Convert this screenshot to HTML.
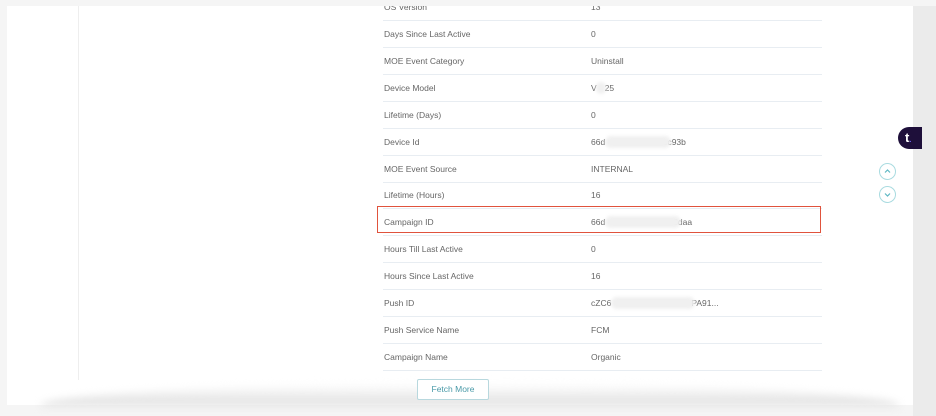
<!DOCTYPE html>
<html><head><style>
body{margin:0;width:936px;height:416px;background:#f5f5f5;position:relative;overflow:hidden;font-family:"Liberation Sans",sans-serif;}
.panel{position:absolute;left:7px;top:6px;width:906px;height:399px;background:#fff;}
.top{position:absolute;left:0;top:0;width:936px;height:6px;background:#f5f5f5;z-index:5;}
.rstrip{position:absolute;left:913px;top:0;width:23px;height:416px;background:#ebebeb;}
.vline{position:absolute;left:78px;top:6px;width:1px;height:374px;background:#eeeeee;}
.row{position:absolute;left:383px;width:439px;height:27px;border-bottom:1px solid #e8edf2;font-size:8.5px;color:#666;}
.row span{position:absolute;top:50%;transform:translateY(-50%);}
.l{left:1px}.v{left:208px}
.blur{position:absolute;background:#f0f0f0;border-radius:8px;filter:blur(1.5px);height:12px;top:50%;transform:translateY(-50%);}
.box{position:absolute;left:377px;top:206px;width:442px;height:25px;border:1.5px solid #e0533d;}
.btn{position:absolute;left:417px;top:379px;width:70px;height:19px;border:1px solid #b8d8de;border-radius:2px;font-size:8.5px;color:#4a9aa8;text-align:center;line-height:19px;background:#fff;z-index:3;}
.shadow{position:absolute;left:40px;top:384px;width:860px;height:22px;background:linear-gradient(#fff,#dedede);border-radius:50% 50% 0 0/100% 100% 0 0;filter:blur(4px);}
.circ{position:absolute;left:879px;width:15px;height:15px;border:1px solid #a9dbe0;border-radius:50%;}
.t{position:absolute;left:898px;top:127px;width:24px;height:22px;background:#1e0f3a;border-radius:11px 0 0 11px;color:#fff;font-weight:bold;font-size:13px;line-height:22px;padding-left:7px;box-sizing:border-box;}
</style></head><body>
<div class="panel"></div>
<div class="rstrip"></div>
<div class="shadow"></div>
<div class="vline"></div>
<div class="row" style="top:-7px"><span class="l">OS Version</span><span class="v">13</span></div>
<div class="top"></div>
<div class="row" style="top:20px"><span class="l">Days Since Last Active</span><span class="v">0</span></div>
<div class="row" style="top:47px"><span class="l">MOE Event Category</span><span class="v">Uninstall</span></div>
<div class="row" style="top:74px"><span class="l">Device Model</span><span class="v">V<span style="position:static;display:inline-block;width:8px"></span>25</span><div class="blur" style="left:213px;width:10px"></div></div>
<div class="row" style="top:101px"><span class="l">Lifetime (Days)</span><span class="v">0</span></div>
<div class="row" style="top:128px"><span class="l">Device Id</span><span class="v">66d<span style="position:static;display:inline-block;width:58px"></span>sc93b</span><div class="blur" style="left:222px;width:66px"></div></div>
<div class="row" style="top:155px"><span class="l">MOE Event Source</span><span class="v">INTERNAL</span></div>
<div class="row" style="top:181px"><span class="l">Lifetime (Hours)</span><span class="v">16</span></div>
<div class="row" style="top:208px"><span class="l">Campaign ID</span><span class="v">66d<span style="position:static;display:inline-block;width:68px"></span>8daa</span><div class="blur" style="left:222px;width:76px"></div></div>
<div class="row" style="top:235px"><span class="l">Hours Till Last Active</span><span class="v">0</span></div>
<div class="row" style="top:262px"><span class="l">Hours Since Last Active</span><span class="v">16</span></div>
<div class="row" style="top:289px"><span class="l">Push ID</span><span class="v">cZC6<span style="position:static;display:inline-block;width:80px"></span>PA91...</span><div class="blur" style="left:228px;width:84px"></div></div>
<div class="row" style="top:316px"><span class="l">Push Service Name</span><span class="v">FCM</span></div>
<div class="row" style="top:343px"><span class="l">Campaign Name</span><span class="v">Organic</span></div>
<div class="box"></div>
<div class="btn">Fetch More</div>
<div class="t">t<span style="color:#7a6cff;font-size:7px">.</span></div>
<div class="circ" style="top:163px"><svg width="15" height="15" viewBox="0 0 15 15"><path d="M5 8.5L7.5 6L10 8.5" stroke="#5fb8c4" stroke-width="1.2" fill="none"/></svg></div>
<div class="circ" style="top:186px"><svg width="15" height="15" viewBox="0 0 15 15"><path d="M5 6.5L7.5 9L10 6.5" stroke="#5fb8c4" stroke-width="1.2" fill="none"/></svg></div>
</body></html>
